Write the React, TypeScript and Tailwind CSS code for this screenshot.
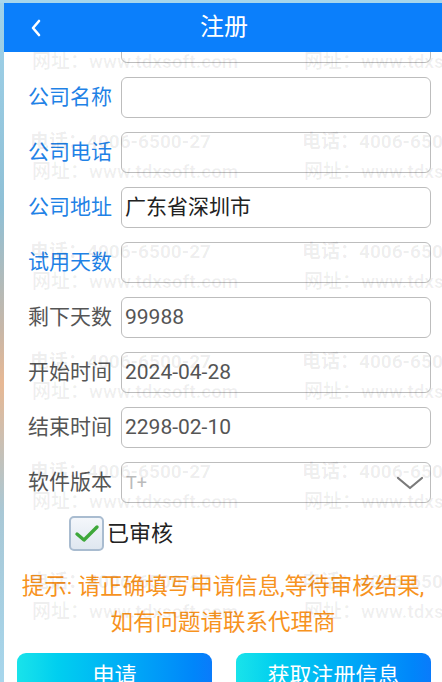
import React from 'react';

const font = "font-['Roboto','Noto_Sans_CJK_SC',sans-serif]";

const rows = [
  { label: '', value: '', blue: true },
  { label: '公司名称', value: '', blue: true },
  { label: '公司电话', value: '', blue: true },
  { label: '公司地址', value: '广东省深圳市', blue: true, dark: true },
  { label: '试用天数', value: '', blue: true },
  { label: '剩下天数', value: '99988', blue: false },
  { label: '开始时间', value: '2024-04-28', blue: false },
  { label: '结束时间', value: '2298-02-10', blue: false },
];

const Watermark = () => {
  const marks: { top: number; left: number; url: boolean }[] = [];
  for (let r = 0; r < 6; r++) {
    for (const left of [30, 302]) {
      marks.push({ top: 20 + r * 110, left, url: false });
      marks.push({ top: 50 + r * 110, left: left + 2, url: true });
    }
  }
  return (
    <div className="pointer-events-none absolute inset-0 overflow-hidden">
      {marks.map((m, i) => (
        <div
          key={i}
          className={`absolute whitespace-nowrap text-[19px] leading-[24px] font-bold ${font} ${
            m.url ? 'text-black/[0.06]' : 'text-black/[0.07]'
          }`}
          style={{ top: m.top, left: m.left }}
        >
          {m.url ? '网址：www.tdxsoft.com' : '电话：4006-6500-27'}
        </div>
      ))}
    </div>
  );
};

const Row = ({ label, value, blue, dark }: { label: string; value: string; blue: boolean; dark?: boolean }) => (
  <div className="flex items-center h-[41px] mb-[14px] pl-[24px] pr-[11px]">
    <div className={`w-[93px] shrink-0 text-[21px] leading-none ${blue ? 'text-[#1f82e6]' : 'text-[#555]'}`}>{label}</div>
    <div className="flex-1 h-full rounded-[6px] border border-[#bdbdbd] flex items-center pl-[3px]">
      <span className={`text-[21px] leading-none ${dark ? 'text-[#222]' : 'text-[#555]'}`}>{value}</span>
    </div>
  </div>
);

export default function App() {
  return (
    <div className={`relative w-[442px] h-[682px] overflow-hidden bg-white flex flex-col ${font}`}>
      <div className="h-[3px] shrink-0 bg-[#a6d6ec]" />
      <div className="flex flex-1 min-h-0">
        <div className="w-[4px] shrink-0 bg-[linear-gradient(to_bottom,#9fd2ea_0%,#8fc0d6_30%,#c7b7a8_48%,#e7b894_56%,#a9c8d6_75%,#a6d6ec_100%)]" />
        <div className="flex-1 flex flex-col min-w-0">
          <div className="relative z-10 h-[49px] shrink-0 bg-[#0b7ffb] flex items-center">
            <svg className="ml-[26px]" width="12" height="18" viewBox="0 0 12 18" fill="none">
              <path d="M9 2 L3 9 L9 16" stroke="white" strokeWidth="2.6" strokeLinecap="round" strokeLinejoin="round" />
            </svg>
            <div className="absolute inset-0 flex items-center justify-center text-white text-[24px] pl-[2px] pb-[1px]">注册</div>
          </div>
          <div className="flex-1 overflow-hidden">
            <div className="-mt-[30px]">
              {rows.map((r, i) => (
                <Row key={i} {...r} />
              ))}
              <div className="flex items-center h-[41px] pl-[24px] pr-[11px]">
                <div className="w-[93px] shrink-0 text-[21px] leading-none text-[#555]">软件版本</div>
                <div className="flex-1 h-full rounded-[6px] border border-[#bdbdbd] flex items-center justify-between pl-[4px] pr-[6px]">
                  <span className="text-[18px] leading-none text-[#bbb]">T+</span>
                  <svg width="28" height="16" viewBox="0 0 28 16" fill="none">
                    <path d="M2 3 L14 13 L26 3" stroke="#7a7a7a" strokeWidth="2.2" strokeLinecap="round" strokeLinejoin="round" />
                  </svg>
                </div>
              </div>
              <div className="flex items-center mt-[13px] ml-[65px]">
                <div className="w-[35px] h-[35px] rounded-[5px] border-2 border-[#a9bcd0] bg-gradient-to-b from-[#f4f7fb] to-[#dfe7f0] flex items-center justify-center">
                  <svg width="26" height="20" viewBox="0 0 26 20" fill="none">
                    <path d="M3 10 L10 16 L23 3" stroke="#3ea83a" strokeWidth="3.4" strokeLinecap="round" strokeLinejoin="round" />
                  </svg>
                </div>
                <span className="ml-[3px] text-[22px] leading-none text-[#222]">已审核</span>
              </div>
              <div className="mt-[17px] text-center text-[22.5px] leading-[36px] text-[#f7931e]">
                <div className="whitespace-nowrap">提示: 请正确填写申请信息,等待审核结果,</div>
                <div>如有问题请联系代理商</div>
              </div>
              <div className="flex justify-between mt-[13px] pl-[13px] pr-[11px]">
                <div className="w-[195px] h-[50px] rounded-[9px] bg-gradient-to-r from-[#19e3ea] to-[#0a7bfb] flex justify-center pt-[12px] text-white text-[22px] leading-none">申请</div>
                <div className="w-[195px] h-[50px] rounded-[9px] bg-gradient-to-r from-[#19e3ea] to-[#0a7bfb] flex justify-center pt-[12px] text-white text-[22px] leading-none">获取注册信息</div>
              </div>
            </div>
          </div>
        </div>
      </div>
      <Watermark />
    </div>
  );
}
